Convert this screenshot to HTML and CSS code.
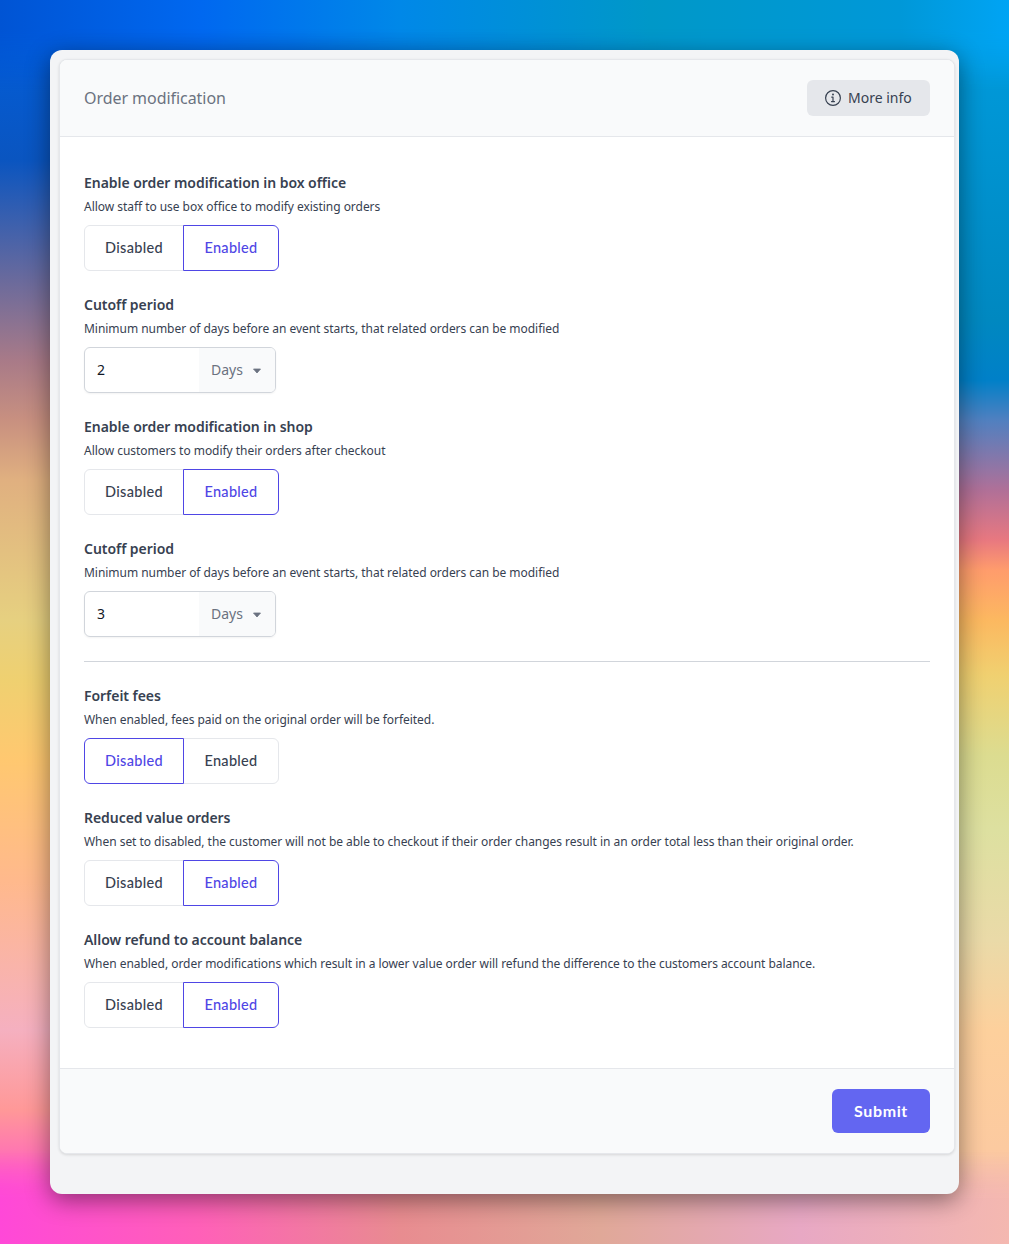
FILE: index.html
```html
<!DOCTYPE html>
<html lang="en">
<head>
<meta charset="utf-8">
<title>Order modification</title>
<link rel="stylesheet" href="styles.css">
</head>
<body>
<div class="window">
  <form class="card">
    <header class="card-header">
      <h1 class="card-title">Order modification</h1>
      <button type="button" class="info-btn">
        <svg class="info-icon" viewBox="0 0 20 20" fill="none" stroke="currentColor" stroke-width="1.2" stroke-linecap="round" stroke-linejoin="round"><circle cx="10" cy="10" r="7.4"/><path d="M8.7 9.1H10V13.6M8.5 13.6h3"/><circle cx="10" cy="6.5" r=".4" fill="currentColor"/></svg>
        More info
      </button>
    </header>
    <div class="card-body">
      <section class="field">
        <div class="label">Enable order modification in box office</div>
        <p class="desc">Allow staff to use box office to modify existing orders</p>
        <div class="toggle"><span class="opt">Disabled</span><span class="opt on">Enabled</span></div>
      </section>
      <section class="field">
        <div class="label">Cutoff period</div>
        <p class="desc">Minimum number of days before an event starts, that related orders can be modified</p>
        <div class="period"><span class="period-value">2</span><span class="period-unit">Days<svg class="caret" viewBox="0 0 10 6"><path d="M1.5 1h7L5 5z"/></svg></span></div>
      </section>
      <section class="field">
        <div class="label">Enable order modification in shop</div>
        <p class="desc">Allow customers to modify their orders after checkout</p>
        <div class="toggle"><span class="opt">Disabled</span><span class="opt on">Enabled</span></div>
      </section>
      <section class="field">
        <div class="label">Cutoff period</div>
        <p class="desc">Minimum number of days before an event starts, that related orders can be modified</p>
        <div class="period"><span class="period-value">3</span><span class="period-unit">Days<svg class="caret" viewBox="0 0 10 6"><path d="M1.5 1h7L5 5z"/></svg></span></div>
      </section>
      <hr class="rule">
      <section class="field">
        <div class="label">Forfeit fees</div>
        <p class="desc">When enabled, fees paid on the original order will be forfeited.</p>
        <div class="toggle"><span class="opt on">Disabled</span><span class="opt">Enabled</span></div>
      </section>
      <section class="field">
        <div class="label">Reduced value orders</div>
        <p class="desc">When set to disabled, the customer will not be able to checkout if their order changes result in an order total less than their original order.</p>
        <div class="toggle"><span class="opt">Disabled</span><span class="opt on">Enabled</span></div>
      </section>
      <section class="field">
        <div class="label">Allow refund to account balance</div>
        <p class="desc">When enabled, order modifications which result in a lower value order will refund the difference to the customers account balance.</p>
        <div class="toggle"><span class="opt">Disabled</span><span class="opt on">Enabled</span></div>
      </section>
    </div>
    <footer class="card-footer">
      <button type="button" class="submit">Submit</button>
    </footer>
  </form>
</div>
</body>
</html>
```
FILE: styles.css
```css
* { box-sizing: border-box; }
html, body { margin: 0; height: 100%; }
body {
  position: relative;
  width: 1009px;
  height: 1244px;
  overflow: hidden;
  padding: 50px;
  font-family: "Noto Sans", sans-serif;
  color: #374151;
  background: linear-gradient(180deg,
    #00a8f8 0, #0098d8 80px, #0088c0 320px, #0080c8 380px, #5080c0 420px, #b07098 490px,
    #e87880 540px, #ff9c6c 570px, #fcb860 620px, #f0d070 675px, #dcdc90 755px, #dde0a0 830px,
    #eadaa8 940px, #fdd09c 1030px, #fccaa0 1150px, #f4b8b0 1230px);
}
/* left side of the backdrop, fading into the right side */
body::before {
  content: "";
  position: absolute;
  inset: 0;
  background: linear-gradient(180deg,
    #0060e0 0, #0a55c0 160px, #6a6a9c 280px, #a87a88 360px, #c89080 420px, #e0b080 480px,
    #e6d080 620px, #efd070 680px, #ffc870 760px, #ffb98c 880px, #f5b0c0 1030px, #ff9898 1110px,
    #ff58c8 1190px, #ff40e8 1244px);
  -webkit-mask-image: linear-gradient(90deg, #000 30%, transparent 70%);
  mask-image: linear-gradient(90deg, #000 30%, transparent 70%);
}
/* top and bottom edges of the backdrop */
body::after {
  content: "";
  position: absolute;
  inset: 0;
  background:
    linear-gradient(90deg, #0054d4 0, #0068f0 200px, #0088e8 400px, #0098c8 650px, #0098d8 900px, #00a4f4 1009px) top / 100% 50% no-repeat,
    linear-gradient(90deg, #ff48d8 0, #ff60b8 200px, #e88c90 400px, #e0a898 600px, #e8a8c4 800px, #f4b8b0 1009px) bottom / 100% 50% no-repeat;
  -webkit-mask-image: linear-gradient(180deg, #000 0, #000 30px, transparent 90px, transparent 1150px, #000 1200px);
  mask-image: linear-gradient(180deg, #000 0, #000 30px, transparent 90px, transparent 1150px, #000 1200px);
}
.window {
  position: relative;
  z-index: 1;
  width: 909px;
  height: 1144px;
  padding: 9px 4px 0 9px;
  background: #f3f4f6;
  border-radius: 12px;
  box-shadow: 0 6px 24px rgba(0,0,0,.45);
}
.card {
  display: flex;
  flex-direction: column;
  height: 1095px;
  background: #fff;
  border: 1px solid #e5e7eb;
  border-radius: 8px;
  box-shadow: 0 1px 3px rgba(0,0,0,.12);
  overflow: hidden;
}
.card-header {
  display: flex;
  align-items: center;
  justify-content: space-between;
  height: 77px;
  padding: 0 24px;
  background: #f9fafb;
  border-bottom: 1px solid #e5e7eb;
}
.card-title { margin: 0; font-size: 16px; font-weight: 400; line-height: 24px; letter-spacing: -.05px; color: #6b7280; }
.info-btn {
  display: flex;
  align-items: center;
  gap: 5px;
  width: 123px;
  height: 36px;
  padding: 0 0 0 16px;
  border: 0;
  border-radius: 6px;
  background: #e5e7eb;
  color: #374151;
  font: 400 14px/20px "Noto Sans", sans-serif;
}
.info-icon { width: 20px; height: 20px; }
.card-body { flex: 1; padding: 36px 24px 0; }
.field { margin-bottom: 24px; }
.label { font-size: 14px; font-weight: 600; line-height: 20px; letter-spacing: -.05px; color: #374151; }
.desc { margin: 6px 0 10px; font-size: 12px; line-height: 16px; letter-spacing: -.04px; color: #374151; }
.toggle { display: flex; width: 195px; height: 46px; }
.opt {
  display: flex;
  align-items: center;
  justify-content: center;
  width: 100px;
  padding-bottom: 2px;
  border: 1px solid #e5e7eb;
  font-family: Lato, sans-serif;
  font-size: 14.5px;
  font-weight: 500;
  letter-spacing: .3px;
  color: #374151;
  background: #fff;
}
.opt:first-child { border-radius: 6px 0 0 6px; }
.opt:last-child { margin-left: -1px; border-radius: 0 6px 6px 0; width: 96px; }
.opt.on { border-color: #4f46e5; color: #4f46e5; position: relative; }
.period {
  display: flex;
  width: 192px;
  height: 46px;
  border: 1px solid #d1d5db;
  border-radius: 6px;
  overflow: hidden;
  box-shadow: 0 1px 2px rgba(0,0,0,.05);
}
.period-value { flex: 1; display: flex; align-items: center; padding: 0 0 2px 12px; font-size: 14px; color: #111827; }
.period-unit { display: flex; align-items: center; width: 76px; padding: 0 0 2px 12px; background: #f9fafb; font-size: 14px; color: #6b7280; }
.caret { margin: 3px 0 0 9px; width: 10px; height: 6px; fill: #6b7280; stroke: #6b7280; stroke-width: .8; stroke-linejoin: round; }
.rule { margin: 0 0 24px; border: 0; border-top: 1px solid #d1d5db; }
.card-footer {
  display: flex;
  justify-content: flex-end;
  align-items: center;
  height: 85px;
  padding: 0 24px;
  background: #f9fafb;
  border-top: 1px solid #e5e7eb;
}
.submit {
  width: 98px;
  height: 44px;
  border: 0;
  border-radius: 6px;
  background: #6366f1;
  color: #fff;
  font: 700 16px/24px Lato, sans-serif;
  letter-spacing: .6px;
}
```
